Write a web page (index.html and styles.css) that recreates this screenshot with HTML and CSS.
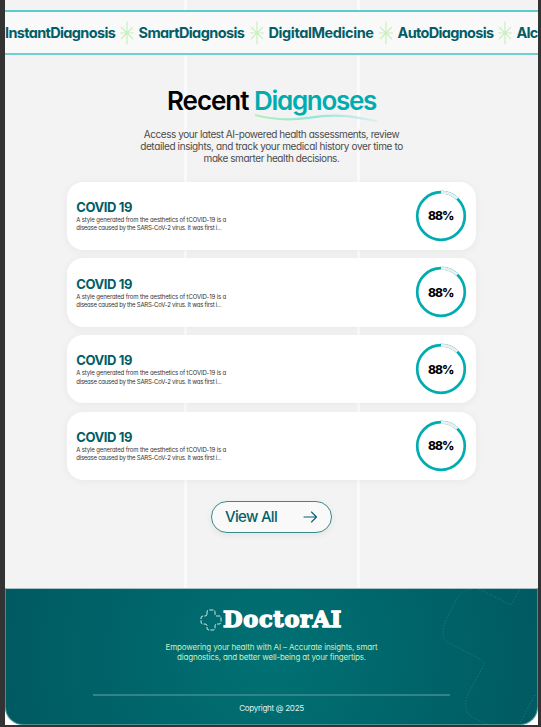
FILE: index.html
```html
<!DOCTYPE html>
<html lang="en">
<head>
<meta charset="utf-8">
<title>DoctorAI</title>
<link rel="stylesheet" href="styles.css">
</head>
<body>
<svg class="defs" aria-hidden="true">
  <symbol id="spark" viewBox="0 0 16 24"><path d="M8 0.5V23.5M1 12H15M2 6L14 18M14 6L2 18" fill="none" stroke="#c9f0bd" stroke-width="1.2"/></symbol>
  <symbol id="ring" viewBox="0 0 52 52"><circle cx="26" cy="26" r="23.8" fill="none" stroke="#01acb1" stroke-width="2.7"/><path d="M26 2.2A23.8 23.8 0 0 1 42.3 8.7" fill="none" stroke="#9bd9db" stroke-width="3.2"/><path d="M26 2.2A23.8 23.8 0 0 1 42.3 8.7" fill="none" stroke="#eeeeee" stroke-width="2.5"/></symbol>
</svg>
<div class="page">
  <div class="marquee">
    <span class="w1">InstantDiagnosis</span><svg><use href="#spark"/></svg>
    <span class="w2">SmartDiagnosis</span><svg><use href="#spark"/></svg>
    <span class="w3">DigitalMedicine</span><svg><use href="#spark"/></svg>
    <span class="w4">AutoDiagnosis</span><svg><use href="#spark"/></svg>
    <span class="w5">AIc</span>
  </div>
  <main>
    <h1><span class="recent">Recent</span><span class="accent">Diagnoses<svg viewBox="0 0 124 10"><defs><linearGradient id="wave"><stop offset="0" stop-color="#b5efb5"/><stop offset=".5" stop-color="#95e5d9"/><stop offset="1" stop-color="#d7f0ee"/></linearGradient></defs><path d="M2 2.2C22 7.5 38 7.3 56 4.6C80 1 96 2.5 122 8" fill="none" stroke="url(#wave)" stroke-width="2.2" stroke-linecap="round"/></svg></span></h1>
    <p class="intro"><span class="i1">Access your latest AI-powered health assessments, review</span><span class="i2">detailed insights, and track your medical history over time to</span><span class="i3">make smarter health decisions.</span></p>
    <section class="cards">
      <article><div><h2>COVID 19</h2><p><span class="c1">A style generated from the aesthetics of tCOVID-19 is a</span><span class="c2">disease caused by the SARS-CoV-2 virus. It was first i...</span></p></div><div class="score"><svg><use href="#ring"/></svg><b>88%</b></div></article>
      <article><div><h2>COVID 19</h2><p><span class="c1">A style generated from the aesthetics of tCOVID-19 is a</span><span class="c2">disease caused by the SARS-CoV-2 virus. It was first i...</span></p></div><div class="score"><svg><use href="#ring"/></svg><b>88%</b></div></article>
      <article><div><h2>COVID 19</h2><p><span class="c1">A style generated from the aesthetics of tCOVID-19 is a</span><span class="c2">disease caused by the SARS-CoV-2 virus. It was first i...</span></p></div><div class="score"><svg><use href="#ring"/></svg><b>88%</b></div></article>
      <article><div><h2>COVID 19</h2><p><span class="c1">A style generated from the aesthetics of tCOVID-19 is a</span><span class="c2">disease caused by the SARS-CoV-2 virus. It was first i...</span></p></div><div class="score"><svg><use href="#ring"/></svg><b>88%</b></div></article>
    </section>
    <a class="view"><span>View All</span><svg viewBox="0 0 14 12"><path d="M.5 6H13M8 1L13 6L8 11" fill="none" stroke="#03636a" stroke-width="1.1" stroke-linecap="round" stroke-linejoin="round"/></svg></a>
  </main>
  <div class="footwrap"><footer>
    <svg class="outline" viewBox="0 0 100 136"><path d="M31 0Q21 1 16 10L7 27Q0 40 3 49Q5 53 10 55L39 70Q45 73 42 78L28 103Q21 117 28 126Q31 129 49 136M38 0L70 16L79 0M78 136L94 106" fill="none" stroke="#0a8a8e" stroke-width=".9" stroke-dasharray="1.2 1.8"/></svg>
    <div class="logo"><svg viewBox="0 0 22 22"><path d="M7 5V3Q7 1 9 1H13Q15 1 15 3V5Q15 7 17 7H19Q21 7 21 9V13Q21 15 19 15H17Q15 15 15 17V19Q15 21 13 21H9Q7 21 7 19V17Q7 15 5 15H3Q1 15 1 13V9Q1 7 3 7H5Q7 7 7 5Z" fill="none" stroke="#c9e8e6" stroke-width="1" stroke-dasharray="4 1.2"/></svg><span>DoctorAI</span></div>
    <p class="tagline"><span class="t1">Empowering your health with AI – Accurate insights, smart</span><span class="t2">diagnostics, and better well-being at your fingertips.</span></p>
    <hr>
    <small>Copyright @ 2025</small>
  </footer></div>
</div>
</body>
</html>
```
FILE: styles.css
```css
* { box-sizing: border-box; }
body { margin: 0; width: 541px; height: 727px; overflow: hidden; background: #333; font-family: Inter, "Liberation Sans", sans-serif; font-feature-settings: "cv11"; }
h1, h2, p { margin: 0; }
svg { flex: none; display: block; }
.defs { position: absolute; width: 0; height: 0; }
.page { width: 533px; height: 725px; margin-left: 5px; padding-top: 10px; overflow: hidden; background: linear-gradient(90deg, transparent 179.5px, #fafafa 179.5px, #fafafa 182px, transparent 182px, transparent 352.5px, #fafafa 352.5px, #fafafa 355px, transparent 355px) #f3f3f3; }
.marquee { height: 45px; border-top: 2px solid #5acccc; border-bottom: 2px solid #70cfd0; background: #f9f9f9; display: flex; align-items: center; white-space: nowrap; color: #035d66; font-size: 14.5px; font-weight: 700; }
.marquee span { flex: none; }
.marquee svg { width: 16px; height: 24px; margin-right: 4px; }
.w1 { width: 113.5px; letter-spacing: -.66px; }
.w2 { width: 110px; letter-spacing: -.6px; }
.w3 { width: 109px; letter-spacing: -.4px; }
.w4 { width: 99px; letter-spacing: -.68px; }
.w5 { letter-spacing: -.8px; }
main { height: 533px; padding-top: 30px; display: flex; flex-direction: column; align-items: center; }
h1 { width: 209px; height: 39px; display: flex; justify-content: space-between; font-size: 26px; line-height: 32px; font-weight: 600; white-space: nowrap; color: #000; }
.recent { letter-spacing: -1.05px; }
.accent { position: relative; width: 122px; color: #01acb1; letter-spacing: -1.3px; }
.accent svg { position: absolute; left: 0; top: 28px; width: 124px; height: 10px; }
.intro { width: 270px; height: 57.5px; padding-top: 4px; text-align: center; font-size: 10px; line-height: 12.2px; color: #4c4c4c; }
p span { display: block; white-space: nowrap; }
.i1 { letter-spacing: -.44px; }
.i2 { letter-spacing: -.38px; }
.i3 { letter-spacing: -.43px; }
.cards { width: 408.5px; display: grid; gap: 8.2px; }
article { height: 68.5px; padding: 0 9px 0 9px; display: flex; align-items: center; justify-content: space-between; border-radius: 16px; background: #fff; box-shadow: 0 1px 8px #0000000d; }
h2 { padding-top: 0; font-size: 13px; line-height: 16px; font-weight: 700; letter-spacing: -.4px; color: #035d66; }
article p { padding-top: 1px; font-size: 6px; line-height: 8.4px; color: #333; }
.c1 { letter-spacing: -.14px; }
.c2 { letter-spacing: -.24px; }
.score { width: 52px; height: 52px; display: grid; place-items: center; }
.score > * { grid-area: 1 / 1; }
.score svg { width: 52px; height: 52px; }
.score b { font-size: 12px; font-weight: 800; letter-spacing: -.9px; color: #000; }
.view { width: 121px; height: 32px; margin-top: 20.5px; padding: 0 13px; display: flex; align-items: center; justify-content: space-between; border: 1px solid #3a898d; border-radius: 16px; background: #f9f9f9; box-shadow: 0 2px 7px #0001; font-size: 15px; font-weight: 500; letter-spacing: -.7px; color: #03636a; }
.view svg { width: 15px; height: 12px; }
.footwrap { height: 137px; background: #fff; }
footer { position: relative; height: 137px; overflow: hidden; padding-top: 19px; display: flex; flex-direction: column; align-items: center; border: 1px solid #498f92; border-top-color: #a5c3c5; border-radius: 0 0 18px 18px; background: radial-gradient(ellipse 280px 280px at 50% 50%, #007174, #005961); }
.outline { position: absolute; right: -4px; top: 0; width: 100px; height: 136px; }
.logo { width: 144px; height: 23px; display: flex; align-items: center; gap: 1.5px; color: #fff; }
.logo svg { width: 22px; height: 22px; }
.logo span { font: 900 22.5px/22px "DejaVu Serif", serif; height: 23px; letter-spacing: .7px; -webkit-text-stroke: 1.4px #fff; white-space: nowrap; }
.tagline { height: 63px; padding-top: 11px; text-align: center; font-size: 8px; line-height: 10.3px; color: #c9f0bd; }
.t1 { letter-spacing: -.16px; }
.t2 { letter-spacing: -.18px; }
hr { width: 357px; height: 2px; margin: 0; border: 0; background: #31858a; }
small { padding-top: 7px; font-size: 8px; line-height: 10px; letter-spacing: -.28px; color: #e2f0ef; }
```
